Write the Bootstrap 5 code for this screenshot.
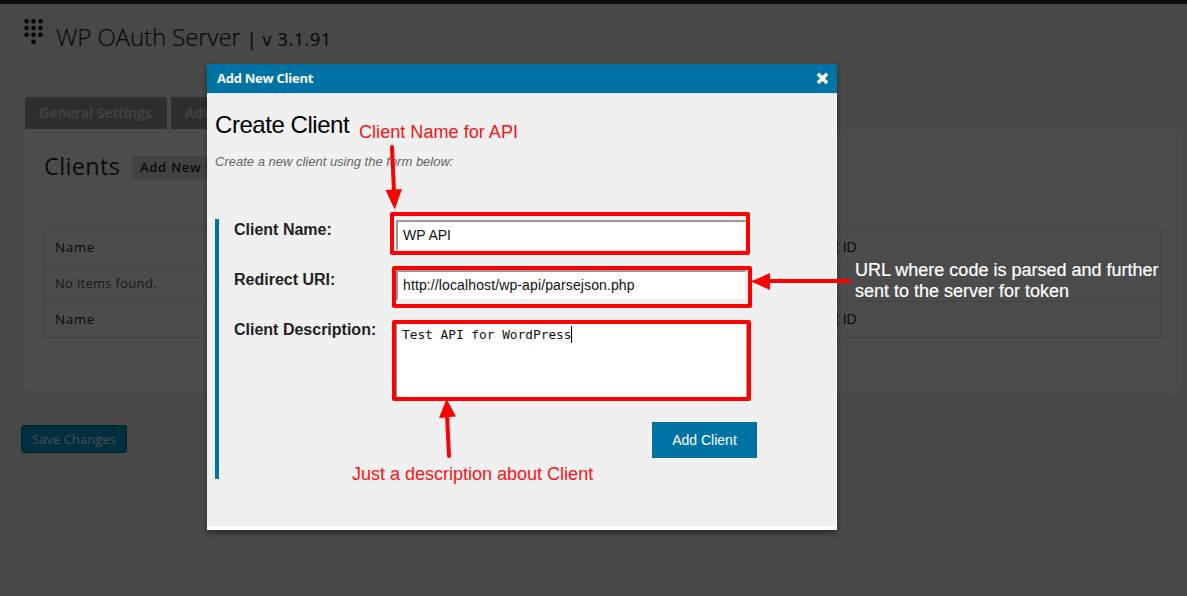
<!DOCTYPE html>
<html lang="en">
<head>
<meta charset="utf-8">
<title>WP OAuth Server</title>
<link href="https://cdn.jsdelivr.net/npm/bootstrap@5.3.0/dist/css/bootstrap.min.css" rel="stylesheet">
<style>
body{background:#f1f1f1;font-family:"Open Sans",sans-serif;color:#23282d;height:596px;overflow:hidden;position:relative}
.admin-strip{height:4px;background:#23282d}
.page-head{padding-left:24px;height:93px}
.keypad{width:20px;height:27px;margin-top:14px}
.page-head h1{font-size:24px;line-height:32px;font-weight:300;margin:17px 0 0 12px;letter-spacing:-.1px;white-space:nowrap;-webkit-text-stroke:.2px #23282d}
.page-head h1 .ver{font-size:18px;font-weight:500;letter-spacing:.6px}
.tabs{height:32px;padding-left:25px;gap:4px}
.tabs span{background:#9c9c9c;color:#e2e2e2;font-size:14px;line-height:32px;padding:0 14px;font-weight:600;width:142px;white-space:nowrap;letter-spacing:.1px}
.panel{background:#fff;margin:0 5px 0 24px;height:264px;border-radius:0 4px 10px 10px;padding:0 20px}
.panel h2{font-size:23.5px;line-height:30px;margin:22px 0 0;width:88px;letter-spacing:.35px;font-weight:400}
.add-new{background:#dcdcdc;border-radius:2px;font-size:13px;font-weight:600;line-height:23px;height:23px;margin-top:27px;padding:0 8px;letter-spacing:.7px}
.clients{margin-top:48px;border:1px solid #e0e0e0;font-size:13.5px;letter-spacing:.5px}
.clients>div{height:35px;line-height:34px;padding-left:10px}
.clients>div+div{height:36px;border-top:1px solid #e3e3e3}
.clients .none-found{font-size:13px;letter-spacing:.3px;color:#555}
.clients .c1{width:748px}
.clients .c2{font-family:"Liberation Sans",sans-serif;font-size:14px;letter-spacing:0}
.save{margin:32px 0 0 21px;width:106px;height:28px;border:1px solid #007096;border-radius:3px;background:#00a0d2;color:#fff;font-size:13px;line-height:26px;padding:0;text-align:center;letter-spacing:.05px}
.shade{background:rgba(0,0,0,.7)}
.dialog{left:207px;top:64px;width:630px;height:466px;background:#f0f0f0;border-bottom:4px solid #fff;box-shadow:0 3px 6px rgba(0,0,0,.4);font-family:"Liberation Sans",sans-serif}
.dialog-head{height:29px;background:#0073a5;color:#fff;font:700 13px/29px "Open Sans",sans-serif;letter-spacing:-.25px;padding:0 8px 0 10px}
.dialog-body{height:433px;padding:0 8px;border-top:1px solid #dde8ee;border-right:1px solid #fff}
.dialog-body h3{font-size:24px;line-height:30px;color:#000;margin:16px 0 0;font-weight:400;letter-spacing:-.45px}
.hint{font-size:13px;line-height:18px;font-style:italic;color:#666;margin:13px 0 48px}
.client-form{height:260px;border-left:4px solid #0073a5;padding-left:15px}
.field{height:50px}
.field label{width:162px;font-weight:700;font-size:16px;line-height:22px;color:#222}
.field input{width:351px;height:31px;margin-top:1px;padding:0 5px 2px;border:2px solid;border-color:#999 #eee #eee #999;font-size:14px;color:#111;background:#fff}
#ru{letter-spacing:.12px}
.field .desc{width:351px;height:78px;margin-top:1px;background:#fff;border:1px solid #999;padding:4px 5px;font:12.8px/20px "DejaVu Sans Mono",monospace;color:#111;white-space:nowrap}
.caret{display:inline-block;width:1px;height:17px;background:#000;vertical-align:-4px;margin-left:-1px}
.add-client{width:105px;height:36px;background:#0073a5;color:#fff;font-size:14px;border:0;border-radius:0;padding:0;margin:53px 71px 0 auto}
.note{color:#f11;font:18px/21px "Liberation Sans",sans-serif;white-space:nowrap}
.note-name{left:359px;top:122px;letter-spacing:.05px}
.note-desc{left:352px;top:464px}
.note-url{left:855px;top:260px;color:#fff;-webkit-text-stroke:.2px #fff}
</style>
</head>
<body>
<div class="admin-strip"></div>
<header class="page-head d-flex align-items-start">
  <svg class="keypad" viewBox="0 0 20 27" fill="#000"><circle cx="2.6" cy="3.2" r="2.3"/><circle cx="9.5" cy="3.2" r="2.3"/><circle cx="16.4" cy="3.2" r="2.3"/><circle cx="2.6" cy="10" r="2.3"/><circle cx="9.5" cy="10" r="2.3"/><circle cx="16.4" cy="10" r="2.3"/><circle cx="2.6" cy="16.8" r="2.3"/><circle cx="9.5" cy="16.8" r="2.3"/><circle cx="16.4" cy="16.8" r="2.3"/><circle cx="9.5" cy="23.7" r="2.3"/></svg>
  <h1>WP OAuth Server <span class="ver"><span class="fw-normal">|</span> v 3.1.91</span></h1>
</header>
<nav class="tabs d-flex"><span>General Settings</span><span>Advanced</span></nav>
<main class="panel">
  <div class="d-flex align-items-start"><h2>Clients</h2><span class="add-new">Add New Client</span></div>
  <div class="clients">
    <div class="d-flex"><span class="c1">Name</span><span class="c2">Client ID</span></div>
    <div class="none-found">No items found.</div>
    <div class="d-flex"><span class="c1">Name</span><span class="c2">Client ID</span></div>
  </div>
</main>
<button class="save btn d-block">Save Changes</button>

<div class="shade position-absolute top-0 start-0 w-100 h-100"></div>

<section class="dialog position-absolute">
  <div class="dialog-head d-flex justify-content-between align-items-center"><span>Add New Client</span>
    <svg width="13" height="13" viewBox="0 0 13 13"><path d="M1.900 1.700 11.100 10.900M11.100 1.700 1.900 10.900" stroke="#fff" stroke-width="3.500"/></svg>
  </div>
  <div class="dialog-body overflow-hidden">
    <h3>Create Client</h3>
    <p class="hint">Create a new client using the form below:</p>
    <form class="client-form">
      <div class="field d-flex align-items-start"><label for="cn">Client Name:</label><input id="cn" type="text" value="WP API"></div>
      <div class="field d-flex align-items-start"><label for="ru">Redirect URI:</label><input id="ru" type="text" value="http://localhost/wp-api/parsejson.php"></div>
      <div class="field d-flex align-items-start"><label>Client Description:</label><div class="desc">Test API for WordPress<span class="caret"></span></div></div>
      <button type="button" class="add-client btn d-block">Add Client</button>
    </form>
  </div>
</section>

<svg class="position-absolute top-0 start-0" width="1187" height="596" viewBox="0 0 1187 596" fill="none" stroke="#f00" stroke-width="4" stroke-linejoin="round" stroke-linecap="round">
  <rect x="392" y="214" width="356" height="39"/>
  <rect x="394" y="268" width="356" height="38"/>
  <rect x="394" y="322" width="355" height="77"/>
  <path d="M392 147 394 192M449 456 447 415M849 281H768"/>
  <path d="M385.500 190 402 189 394.700 209.500zM439 418 456 416.500 446.500 399zM770 273V290L751 281.500z" fill="#f00" stroke="none"/>
</svg>
<div class="note note-name position-absolute">Client Name for API</div>
<div class="note note-desc position-absolute">Just a description about Client</div>
<div class="note note-url position-absolute">URL where code is parsed and further<br>sent to the server for token</div>
<script src="https://cdn.jsdelivr.net/npm/bootstrap@5.3.0/dist/js/bootstrap.bundle.min.js"></script>
</body>
</html>
